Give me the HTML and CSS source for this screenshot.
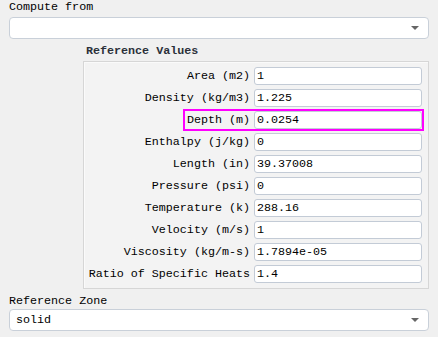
FILE: index.html
```html
<!DOCTYPE html>
<html lang="en">
<head>
    <meta charset="UTF-8">
    <title>Reference Values</title>
    <link rel="stylesheet" href="styles.css">
</head>
<body>
    <div class="page">
        <div class="label">Compute from</div>
        <div class="select"><span class="value"></span><span class="arrow"></span></div>

        <div class="group">
            <div class="group-title">Reference Values</div>
            <div class="group-box">
                <div class="row"><div class="pair"><span class="name">Area (m2)</span><div class="input">1</div></div></div>
                <div class="row"><div class="pair"><span class="name">Density (kg/m3)</span><div class="input">1.225</div></div></div>
                <div class="row"><div class="pair hl"><span class="name">Depth (m)</span><div class="input">0.0254</div></div></div>
                <div class="row"><div class="pair"><span class="name">Enthalpy (j/kg)</span><div class="input">0</div></div></div>
                <div class="row"><div class="pair"><span class="name">Length (in)</span><div class="input">39.37008</div></div></div>
                <div class="row"><div class="pair"><span class="name">Pressure (psi)</span><div class="input">0</div></div></div>
                <div class="row"><div class="pair"><span class="name">Temperature (k)</span><div class="input">288.16</div></div></div>
                <div class="row"><div class="pair"><span class="name">Velocity (m/s)</span><div class="input">1</div></div></div>
                <div class="row"><div class="pair"><span class="name">Viscosity (kg/m-s)</span><div class="input">1.7894e-05</div></div></div>
                <div class="row"><div class="pair"><span class="name">Ratio of Specific Heats</span><div class="input">1.4</div></div></div>
            </div>
        </div>

        <div class="label zone">Reference Zone</div>
        <div class="select"><span class="value">solid</span><span class="arrow"></span></div>
    </div>
</body>
</html>
```

FILE: styles.css
```css
body {
    margin: 0;
    background-color: #f0f0f0;
    font-family: "Liberation Mono", "DejaVu Sans Mono", monospace;
    font-size: 11.7px;
    color: #000;
}

.page {
    padding: 0 9px;
}

.label {
    line-height: 15px;
    margin-bottom: 2px;
}

.label.zone {
    margin-top: 5px;
    margin-bottom: 0;
}

.select {
    height: 22px;
    box-sizing: border-box;
    background-color: #fff;
    border: 1px solid #c9d0d9;
    border-radius: 4px;
    display: flex;
    align-items: center;
    justify-content: space-between;
    padding: 0 9px 0 6px;
}

.arrow {
    width: 0;
    height: 0;
    border-left: 4px solid transparent;
    border-right: 4px solid transparent;
    border-top: 4px solid #666;
}

.group {
    margin-left: 74px;
}

.group-title {
    font-weight: bold;
    line-height: 16px;
    padding: 4px 0 2px 3px;
    color: #2b303a;
}

.group-box {
    border: 1px solid #d6d6d6;
    box-shadow: inset 1px 1px #fafafa;
    background-color: #f3f3f3;
    padding: 3px 6px 3px 4px;
}

.row {
    height: 22px;
    display: flex;
    justify-content: flex-end;
    align-items: center;
}

.pair {
    display: flex;
    align-items: center;
    gap: 4px;
}

.pair.hl {
    outline: 2px solid #ff00ff;
    padding-left: 2px;
}

.input {
    width: 168px;
    height: 18px;
    box-sizing: border-box;
    background-color: #fff;
    border: 1px solid #c3cbd6;
    border-radius: 3px;
    padding-left: 2px;
    line-height: 16px;
}
```
